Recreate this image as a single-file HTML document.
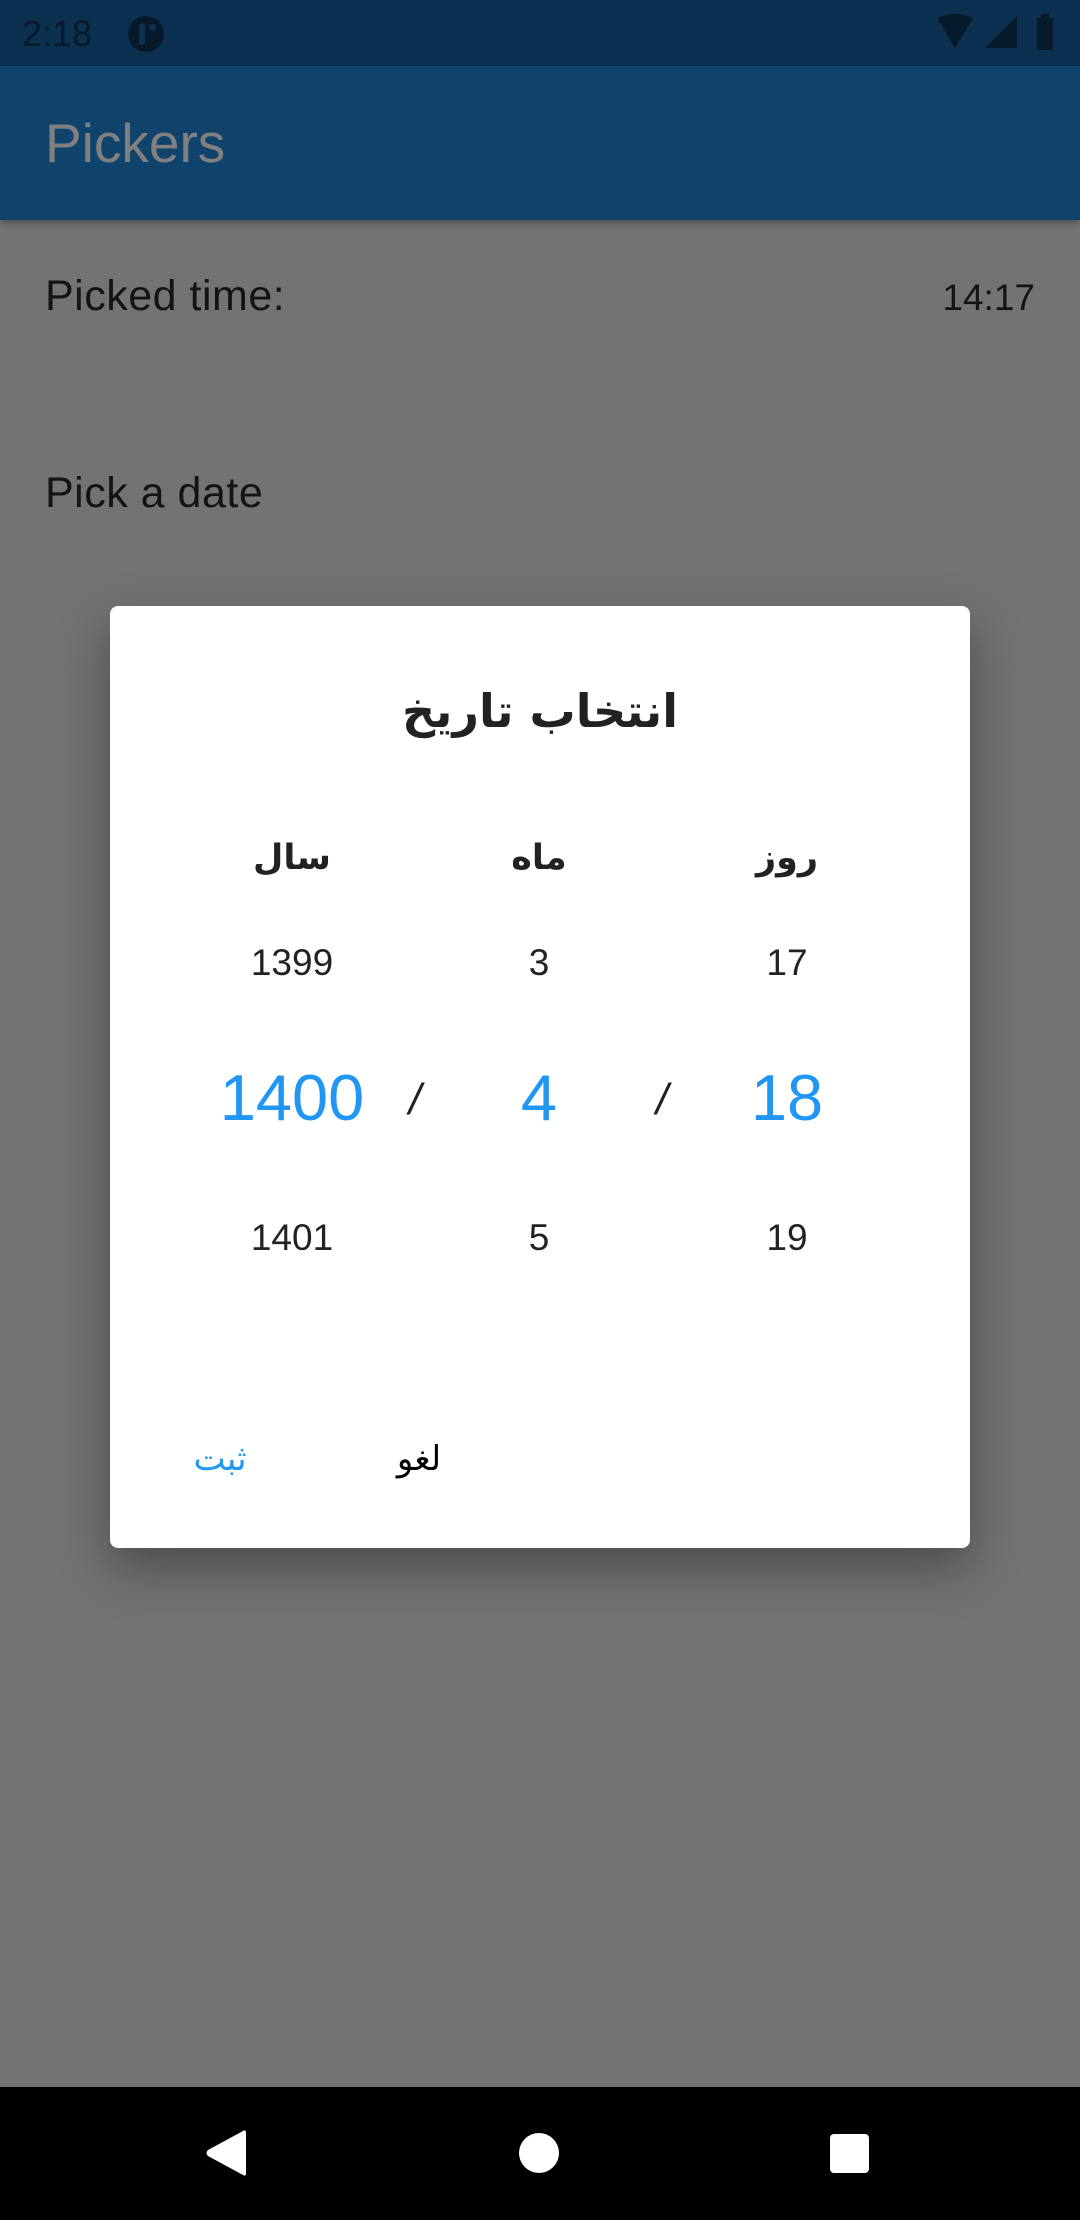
<!DOCTYPE html>
<html><head><meta charset="utf-8"><style>
*{margin:0;padding:0;box-sizing:border-box}
body{width:1080px;height:2220px;position:relative;overflow:hidden;background:#737373;font-family:"Liberation Sans","DejaVu Sans",sans-serif}
.abs{position:absolute}
</style></head><body>
<div class="abs" style="left:0;top:0;width:1080px;height:66px;background:#0b3050"></div>
<div class="abs" style="left:22px;top:12px;font-size:36px;color:#061a2b;line-height:44px">2:18</div>
<div class="abs" style="left:128px;top:16px;width:36px;height:36px;border-radius:50%;background:#061a2b"></div>
<div class="abs" style="left:139px;top:23px;width:6px;height:22px;background:#0b3050;border-radius:3px"></div>
<div class="abs" style="left:149px;top:24px;width:7px;height:7px;background:#0b3050;border-radius:50%"></div>
<svg class="abs" style="left:935px;top:14px" width="130" height="38" viewBox="0 0 130 38">
<path d="M2 4 Q20 -4 38 4 L20 34 Z" fill="#061a2b"/>
<path d="M50 34 L82 2 L82 34 Z" fill="#061a2b"/>
<rect x="102" y="4" width="16" height="32" rx="2" fill="#061a2b"/>
<rect x="106" y="0" width="8" height="5" fill="#061a2b"/>
</svg>
<div class="abs" style="left:0;top:66px;width:1080px;height:154px;background:#10446d;box-shadow:0 3px 6px rgba(0,0,0,.3)"></div>
<div class="abs" style="left:45px;top:111px;font-size:55px;color:#808080;line-height:64px">Pickers</div>
<div class="abs" style="left:45px;top:271px;font-size:43px;color:#141414;line-height:50px;letter-spacing:0.5px">Picked time:</div>
<div class="abs" style="right:45px;top:276px;font-size:37px;color:#141414;line-height:44px">14:17</div>
<div class="abs" style="left:45px;top:468px;font-size:43px;color:#141414;line-height:50px;letter-spacing:0.5px">Pick a date</div>

<div class="abs" style="left:110px;top:606px;width:860px;height:942px;background:#fff;border-radius:8px;box-shadow:0 20px 50px rgba(0,0,0,.35)"></div>
<div class="abs" style="left:110px;top:676px;width:860px;text-align:center;font-size:46px;font-weight:bold;color:#222;line-height:70px;font-family:'DejaVu Sans',sans-serif" dir="rtl">انتخاب تاریخ</div>

<div class="abs" style="left:192px;top:830px;width:200px;text-align:center;font-size:35px;font-weight:bold;color:#222;line-height:56px;font-family:'DejaVu Sans',sans-serif">سال</div>
<div class="abs" style="left:439px;top:830px;width:200px;text-align:center;font-size:35px;font-weight:bold;color:#222;line-height:56px;font-family:'DejaVu Sans',sans-serif">ماه</div>
<div class="abs" style="left:687px;top:830px;width:200px;text-align:center;font-size:35px;font-weight:bold;color:#222;line-height:56px;font-family:'DejaVu Sans',sans-serif">روز</div>

<div class="abs" style="left:192px;top:941px;width:200px;text-align:center;font-size:37px;color:#222;line-height:44px">1399</div>
<div class="abs" style="left:439px;top:941px;width:200px;text-align:center;font-size:37px;color:#222;line-height:44px">3</div>
<div class="abs" style="left:687px;top:941px;width:200px;text-align:center;font-size:37px;color:#222;line-height:44px">17</div>

<div class="abs" style="left:142px;top:1058px;width:300px;text-align:center;font-size:65px;color:#2196f3;line-height:80px">1400</div>
<div class="abs" style="left:389px;top:1058px;width:300px;text-align:center;font-size:65px;color:#2196f3;line-height:80px">4</div>
<div class="abs" style="left:637px;top:1058px;width:300px;text-align:center;font-size:65px;color:#2196f3;line-height:80px">18</div>
<div class="abs" style="left:385px;top:1075px;width:60px;text-align:center;font-size:44px;color:#222;line-height:50px;font-style:italic">/</div>
<div class="abs" style="left:632px;top:1075px;width:60px;text-align:center;font-size:44px;color:#222;line-height:50px;font-style:italic">/</div>

<div class="abs" style="left:192px;top:1216px;width:200px;text-align:center;font-size:37px;color:#222;line-height:44px">1401</div>
<div class="abs" style="left:439px;top:1216px;width:200px;text-align:center;font-size:37px;color:#222;line-height:44px">5</div>
<div class="abs" style="left:687px;top:1216px;width:200px;text-align:center;font-size:37px;color:#222;line-height:44px">19</div>

<div class="abs" style="left:160px;top:1434px;width:120px;text-align:center;font-size:34px;color:#2196f3;line-height:50px;font-family:'DejaVu Sans',sans-serif">ثبت</div>
<div class="abs" style="left:359px;top:1434px;width:120px;text-align:center;font-size:34px;color:#000;line-height:50px;font-family:'DejaVu Sans',sans-serif">لغو</div>

<div class="abs" style="left:0;top:2087px;width:1080px;height:133px;background:#000"></div>
<svg class="abs" style="left:0;top:2087px" width="1080" height="133">
<path d="M246 46 L246 86 Q246 90 243 88 L208 69 Q205 66 208 63 L243 44 Q246 42 246 46 Z" fill="#fff"/>
<circle cx="539" cy="66" r="20" fill="#fff"/>
<rect x="830" y="47" width="39" height="39" rx="4" fill="#fff"/>
</svg>
</body></html>
